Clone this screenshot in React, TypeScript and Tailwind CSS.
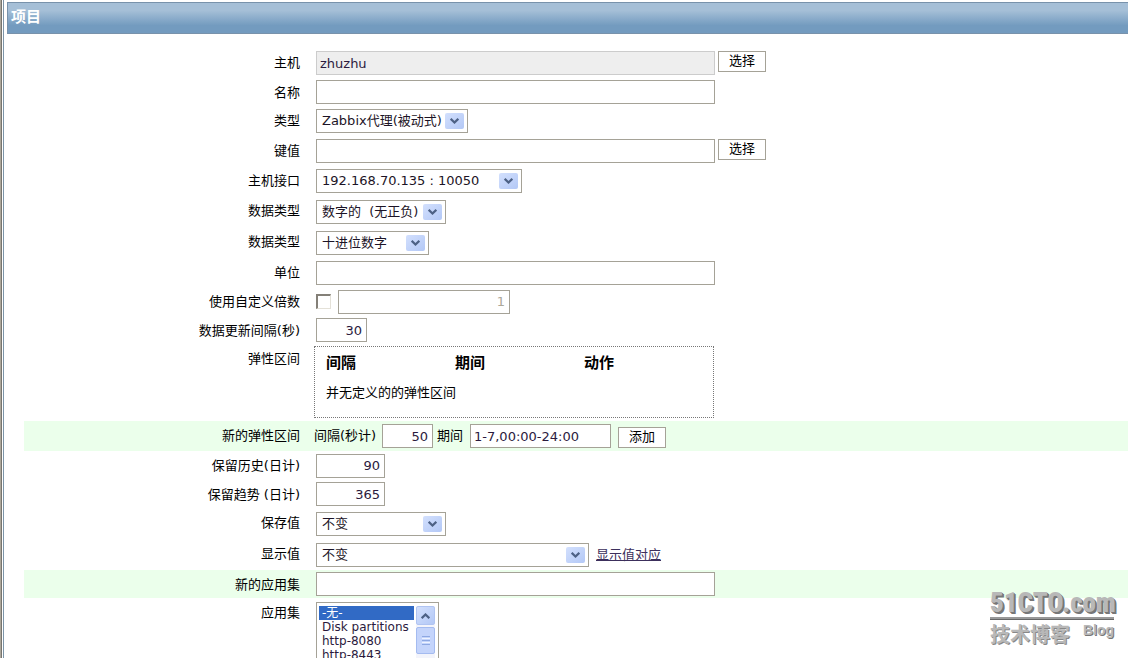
import { ReactNode } from 'react';
import clsx from 'clsx';

const inputClass = 'h-6 border border-[#a5a297] bg-white px-[3px] text-[13px] text-[#2b1a3d] outline-none';
const numberClass = 'h-6 border border-[#a5a297] bg-white pr-1 text-right text-[13px] text-[#2b1a3d] outline-none';
const buttonClass = 'h-[21px] w-12 border border-[#a5a297] bg-white pb-0.5 text-[13px] leading-4 text-black';

type RowProps = {
  label: string;
  htmlFor?: string;
  className?: string;
  children: ReactNode;
};

function Row({ label, htmlFor, className = 'h-[29px]', children }: RowProps) {
  return (
    <div className={clsx('flex', className)}>
      <label htmlFor={htmlFor} className="flex h-[30px] w-[276px] shrink-0 items-center justify-end">
        {label}
      </label>
      <div className="flex min-w-0 flex-1 items-center pl-4">{children}</div>
    </div>
  );
}

type SelectProps = {
  id: string;
  options: string[];
  className: string;
};

function Select({ id, options, className }: SelectProps) {
  return (
    <div className={clsx('grid h-6 items-center border border-[#a5a297] bg-white', className)}>
      <select
        id={id}
        className="col-start-1 row-start-1 h-full w-full appearance-none bg-transparent pl-[5px] text-[13px] text-[#1c1426] outline-none"
      >
        {options.map((option) => (
          <option key={option}>{option}</option>
        ))}
      </select>
      <ArrowButton className="pointer-events-none col-start-1 row-start-1 mr-[3px] h-4 w-[19px] justify-self-end" />
    </div>
  );
}

function ArrowButton({ className, up = false }: { className: string; up?: boolean }) {
  return (
    <span className={clsx('flex items-center justify-center rounded-xs bg-linear-to-br from-[#d3e0fd] to-[#b3c8f6]', className)}>
      <svg viewBox="0 0 9 6" className={clsx('h-1.5 w-[9px]', up && 'rotate-180')} fill="none" stroke="#4d6185" strokeWidth="2.2">
        <path d="M0.7 0.8 L4.5 4.5 L8.3 0.8" />
      </svg>
    </span>
  );
}

function Watermark() {
  return (
    <div className="pointer-events-none absolute right-[14px] bottom-2.5 w-[124px] font-bold text-[#b8b8b8] [text-shadow:1px_1px_0_#777,2px_2px_0_#777]">
      <div className="font-['Roboto_Condensed',Roboto,sans-serif] text-[27px] leading-7 font-black whitespace-nowrap">
        51CTO.com
      </div>
      <div className="h-[3px] border-b border-[#666] bg-[#999]" />
      <div className="flex items-start justify-between">
        <span className="font-['Noto_Sans_CJK_SC',sans-serif] text-[20px] leading-7 [text-shadow:1px_1px_0_#888]">技术博客</span>
        <span className="font-['Liberation_Sans',sans-serif] text-[14px] leading-5 [text-shadow:1px_1px_0_#777]">Blog</span>
      </div>
    </div>
  );
}

export default function App() {
  const applications = ['-无-', 'Disk partitions', 'http-8080', 'http-8443', 'Interfaces', 'Memory'];

  return (
    <div className="relative flex h-screen overflow-hidden bg-white font-['DejaVu_Sans','Noto_Sans_CJK_SC',sans-serif] text-[13px] leading-4 text-black">
      <div className="w-1 shrink-0 border-r border-l border-r-[#7d95a8] border-l-[#aca79c] bg-white">
        <div className="h-full w-px bg-[#77756e]" />
      </div>

      <div className="min-w-0 flex-1 overflow-y-auto pt-0.5 pl-[3px] [scrollbar-width:none]">
        <h1 className="h-8 border border-r-0 border-[#7892ab] bg-linear-to-b from-[#a5bfd7] from-25% to-[#739bbf] to-75% pl-[3px] text-[15px] leading-[28px] font-bold text-white">
          项目
        </h1>

        <form className="mt-3.5 pl-[17px]" onSubmit={(e) => e.preventDefault()}>
          <Row label="主机" htmlFor="host" className="h-[30px]">
            <div className="flex items-start gap-[3px]">
              <input
                id="host"
                readOnly
                defaultValue="zhuzhu"
                className="h-6 w-[399px] border border-[#cccccc] bg-[#eeeeee] px-[3px] text-[13px] text-[#2b1a3d] outline-none"
              />
              <button type="button" className={buttonClass}>选择</button>
            </div>
          </Row>
          <Row label="名称" htmlFor="name" className="h-7">
            <input id="name" className={clsx(inputClass, 'w-[399px]')} />
          </Row>
          <Row label="类型" htmlFor="type" className="h-[30px]">
            <Select id="type" className="w-[152px]" options={['Zabbix代理(被动式)']} />
          </Row>
          <Row label="键值" htmlFor="key" className="h-[30px]">
            <div className="flex items-start gap-[3px]">
              <input id="key" className={clsx(inputClass, 'w-[399px]')} />
              <button type="button" className={buttonClass}>选择</button>
            </div>
          </Row>
          <Row label="主机接口" htmlFor="interface" className="h-[30px]">
            <Select id="interface" className="w-[206px]" options={['192.168.70.135 : 10050']} />
          </Row>
          <Row label="数据类型" htmlFor="valueType" className="h-[31px]">
            <Select id="valueType" className="w-[130px]" options={['数字的\u00a0 (无正负)']} />
          </Row>
          <Row label="数据类型" htmlFor="dataType" className="h-[31px]">
            <Select id="dataType" className="w-[113px]" options={['十进位数字']} />
          </Row>
          <Row label="单位" htmlFor="units">
            <input id="units" className={clsx(inputClass, 'w-[399px]')} />
          </Row>
          <Row label="使用自定义倍数" htmlFor="multiplier">
            <input
              id="multiplier"
              type="checkbox"
              className="size-[15px] appearance-none border-t-2 border-r border-b border-l-2 border-t-[#848078] border-r-[#e4e1d8] border-b-[#e4e1d8] border-l-[#848078] bg-white"
            />
            <input
              aria-label="倍数"
              disabled
              defaultValue="1"
              className="ml-[7px] h-6 w-[172px] border border-[#a5a297] bg-white pr-1 text-right text-[13px] text-[#aca899]"
            />
          </Row>
          <Row label="数据更新间隔(秒)" htmlFor="delay" className="h-7">
            <input id="delay" defaultValue="30" className={clsx(numberClass, 'w-[51px]')} />
          </Row>

          <Row label="弹性区间" className="h-[77px] pb-0.5">
            <div className="-ml-0.5 h-[72px] w-[400px] border border-dotted border-[#777777] pl-[11px]">
              <table className="w-full table-fixed text-left">
                <thead>
                  <tr className="h-8 text-[15px]">
                    <th>间隔</th>
                    <th>期间</th>
                    <th>动作</th>
                  </tr>
                </thead>
                <tbody>
                  <tr className="h-7">
                    <td colSpan={3}>并无定义的的弹性区间</td>
                  </tr>
                </tbody>
              </table>
            </div>
          </Row>

          <Row label="新的弹性区间" htmlFor="flexDelay" className="h-[30px] bg-[#ebffeb]">
            <div className="-ml-0.5 flex items-end">
              <label htmlFor="flexDelay" className="w-[68px] self-center whitespace-nowrap">间隔(秒计)</label>
              <input id="flexDelay" defaultValue="50" className={clsx(numberClass, 'w-[51px]')} />
              <label htmlFor="flexPeriod" className="w-[37px] self-center pl-1">期间</label>
              <input id="flexPeriod" defaultValue="1-7,00:00-24:00" className={clsx(inputClass, 'w-[141px]')} />
              <button type="button" className={clsx(buttonClass, 'ml-[7px]')}>添加</button>
            </div>
          </Row>
          <Row label="保留历史(日计)" htmlFor="history">
            <input id="history" defaultValue="90" className={clsx(numberClass, 'w-[69px]')} />
          </Row>
          <Row label="保留趋势 (日计)" htmlFor="trends" className="h-7">
            <input id="trends" defaultValue="365" className={clsx(numberClass, 'w-[69px]')} />
          </Row>
          <Row label="保存值" htmlFor="delta" className="h-[31px]">
            <Select id="delta" className="w-[130px]" options={['不变']} />
          </Row>
          <Row label="显示值" htmlFor="valuemap" className="h-[31px]">
            <Select id="valuemap" className="w-[273px]" options={['不变']} />
            <a href="#" className="ml-[7px] text-[#3c2f5c] underline">显示值对应</a>
          </Row>
          <Row label="新的应用集" htmlFor="newApplication" className="h-7 bg-[#ebffeb]">
            <input id="newApplication" className={clsx(inputClass, 'w-[399px]')} />
          </Row>

          <Row label="应用集" htmlFor="applications" className="h-[98px]">
            <div className="flex h-[90px] w-[123px] border border-[#a5a297] bg-white py-[3px] pl-0.5">
              <select
                id="applications"
                multiple
                defaultValue={['-无-']}
                className="h-full w-[95px] overflow-hidden border-0 bg-white text-[12px] text-[#2b1a3d] outline-none [scrollbar-width:none]"
              >
                {applications.map((name) => (
                  <option
                    key={name}
                    className="h-[14px] min-h-0 px-[3px] py-0 first:-mt-[3px] first:h-[17px] checked:bg-[#316ac5] checked:bg-[linear-gradient(#316ac5,#316ac5)] checked:text-white"
                  >
                    {name}
                  </option>
                ))}
              </select>
              <div className="ml-0.5 flex w-[19px] flex-col gap-0.5 bg-[#f3f4fb]">
                <ArrowButton up className="h-[19px] w-full border border-[#b0c4f2]" />
                <div className="flex h-[27px] flex-col items-center justify-center gap-px rounded-xs border border-[#a4bbf0] bg-[#c4d4fb]">
                  <i className="h-px w-2 bg-[#8ea8e2]" />
                  <i className="h-px w-2 bg-[#eef3ff]" />
                  <i className="h-px w-2 bg-[#8ea8e2]" />
                  <i className="h-px w-2 bg-[#eef3ff]" />
                  <i className="h-px w-2 bg-[#8ea8e2]" />
                </div>
              </div>
            </div>
          </Row>
        </form>
      </div>

      <Watermark />
    </div>
  );
}
